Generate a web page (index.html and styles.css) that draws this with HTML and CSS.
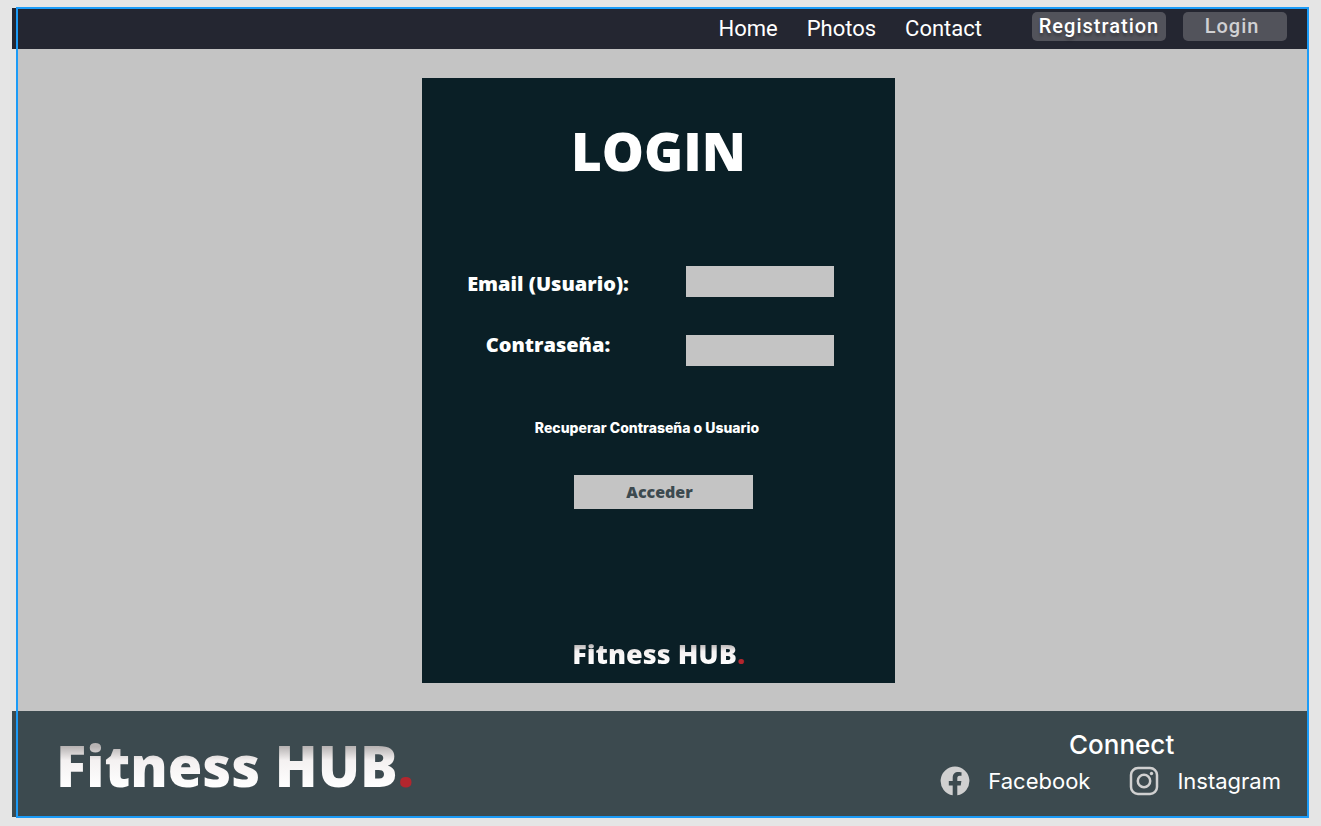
FILE: index.html
```html
<!DOCTYPE html>
<html lang="es">
<head>
<meta charset="utf-8">
<meta name="viewport" content="width=device-width, initial-scale=1">
<title>Fitness HUB - Login</title>
<link rel="stylesheet" href="styles.css">
</head>
<body>
<div class="frame">
  <header class="topbar">
    <nav class="nav">
      <a class="nav-link" href="#">Home</a>
      <a class="nav-link" href="#">Photos</a>
      <a class="nav-link" href="#">Contact</a>
    </nav>
    <div class="actions">
      <button class="pill pill-strong" type="button">Registration</button>
      <button class="pill" type="button">Login</button>
    </div>
  </header>

  <main class="content">
    <form class="card">
      <h1 class="title">LOGIN</h1>
      <div class="fields">
        <div class="labels">
          <label class="label" for="email">Email (Usuario):</label>
          <label class="label" for="password">Contraseña:</label>
        </div>
        <div class="inputs">
          <input class="input" id="email" type="email">
          <input class="input" id="password" type="password">
        </div>
      </div>
      <a class="recover" href="#">Recuperar Contraseña o Usuario</a>
      <button class="submit" type="submit">Acceder</button>
      <p class="brand brand-small"><span class="brand-name">Fitness HUB</span><span class="brand-dot">.</span></p>
    </form>
  </main>

  <footer class="footer">
    <p class="brand brand-large"><span class="brand-name">Fitness HUB</span><span class="brand-dot">.</span></p>
    <section class="connect">
      <h2 class="connect-title">Connect</h2>
      <div class="socials">
        <a class="social" href="#">
          <svg class="icon" viewBox="0 0 30 30" aria-hidden="true"><path fill="#d0d0d0" d="M15 .5a14.5 14.5 0 0 0-2.3 28.8V19.500H8.800v-4.500h3.900v-3.200c0-3.900 2.200-5.900 5.600-5.900 1.600 0 3.200.3 3.200.3v3.600h-1.800c-1.800 0-2.400 1.100-2.400 2.200v3h4.100l-.7 4.500h-3.400v9.800A14.500 14.500 0 0 0 15 .5z"/></svg>
          <span>Facebook</span>
        </a>
        <a class="social" href="#">
          <svg class="icon" viewBox="0 0 30 30" aria-hidden="true"><g fill="none" stroke="#d0d0d0"><rect x="2" y="2" width="26" height="26" rx="7" stroke-width="2.500"/><circle cx="15" cy="15" r="6.200" stroke-width="2.500"/></g><circle cx="22.500" cy="7.500" r="1.700" fill="#d0d0d0"/></svg>
          <span>Instagram</span>
        </a>
      </div>
    </section>
  </footer>
  <div class="selection"></div>
</div>
</body>
</html>
```
FILE: styles.css
```css
* {
  box-sizing: border-box;
}

body {
  margin: 0;
  background: #e5e5e5;
  color: #fff;
  font-family: Inter, "Liberation Sans", sans-serif;
}

h1, h2, p {
  margin: 0;
}

a {
  color: inherit;
  text-decoration: none;
}

button {
  border: 0;
  padding: 0;
  font: inherit;
  color: inherit;
}

.frame {
  position: relative;
  display: flex;
  flex-direction: column;
  min-height: 100vh;
  padding: 8px 13px 9px 12px;
}

.topbar {
  display: flex;
  justify-content: flex-end;
  align-items: flex-start;
  gap: 50px;
  padding: 4px 21px 3px;
  background: #242631;
  font-family: Roboto, "Liberation Sans", sans-serif;
}

.nav {
  display: flex;
  gap: 29px;
}

.nav-link {
  font-size: 22px;
  line-height: 34px;
}

.actions {
  display: flex;
  gap: 17px;
}

.pill {
  width: 104px;
  height: 29px;
  border-radius: 5px;
  padding-right: 6px;
  background: #52535b;
  color: #d0d0d3;
  font-size: 20px;
  font-weight: 500;
  line-height: 29px;
  letter-spacing: 1px;
}

.pill-strong {
  width: 134px;
  padding-right: 0;
  color: #fff;
  text-shadow: 0 3px 3px rgba(0, 0, 0, 0.3);
}

.content {
  flex: 1;
  display: flex;
  justify-content: center;
  align-items: flex-start;
  margin-left: 6px;
  padding: 29px 9px 28px 0;
  background: #c4c4c4;
}

.card {
  display: flex;
  flex-direction: column;
  align-items: center;
  width: 473px;
  max-width: 100%;
  padding: 43px 0 13px;
  background: #0a1f26;
  font-family: "Open Sans", "Noto Sans", sans-serif;
}

.title {
  font-size: 53px;
  font-weight: 800;
  line-height: 60px;
}

.fields {
  display: flex;
  align-items: center;
  gap: 56px;
  margin: 85px 17px 0 0;
}

.labels {
  display: flex;
  flex-direction: column;
  gap: 37px;
  width: 164px;
  padding-bottom: 4px;
}

.inputs {
  display: flex;
  flex-direction: column;
  gap: 38px;
  width: 148px;
}

.label {
  font-size: 20px;
  font-weight: 800;
  line-height: 24px;
  text-align: center;
  white-space: nowrap;
}

.input {
  width: 100%;
  height: 31px;
  border: 0;
  border-radius: 0;
  padding: 0 8px;
  background: #c4c4c4;
  color: #0a1f26;
  font: inherit;
}

.recover {
  margin: 52px 23px 0 0;
  font-family: Inter, "Liberation Sans", sans-serif;
  font-size: 14px;
  font-weight: 800;
  line-height: 20px;
}

.submit {
  width: 179px;
  height: 34px;
  margin: 37px 0 0 10px;
  padding-right: 8px;
  background: #c4c4c4;
  color: #3c4a4f;
  font-size: 16px;
  font-weight: 800;
}

.brand {
  font-family: "Open Sans", "Noto Sans", sans-serif;
  font-weight: 800;
  white-space: nowrap;
}

.brand-name {
  background: linear-gradient(#b8b4b4 26%, #f4f1f1 44%, #fff 80%);
  background-clip: text;
  -webkit-background-clip: text;
  color: transparent;
}

.brand-dot {
  color: #b3262e;
}

.brand-small {
  margin-top: 129px;
  font-size: 27px;
  line-height: 32px;
}

.brand-large {
  font-size: 56px;
  line-height: 64px;
}

.footer {
  display: flex;
  justify-content: space-between;
  align-items: center;
  min-height: 106px;
  padding: 18px 27px 16px 44px;
  background: #3c4a4f;
}

.connect-title {
  padding-left: 22px;
  font-size: 26px;
  font-weight: 500;
  line-height: 32px;
  text-align: center;
}

.socials {
  display: flex;
  gap: 39px;
}

.social {
  display: flex;
  align-items: center;
  gap: 18px;
  font-size: 22px;
  line-height: 40px;
}

.icon {
  width: 30px;
  height: 30px;
}

.selection {
  position: absolute;
  inset: 7px 12px 8px 16px;
  border: 2px solid #1b9bf7;
  pointer-events: none;
}
```
